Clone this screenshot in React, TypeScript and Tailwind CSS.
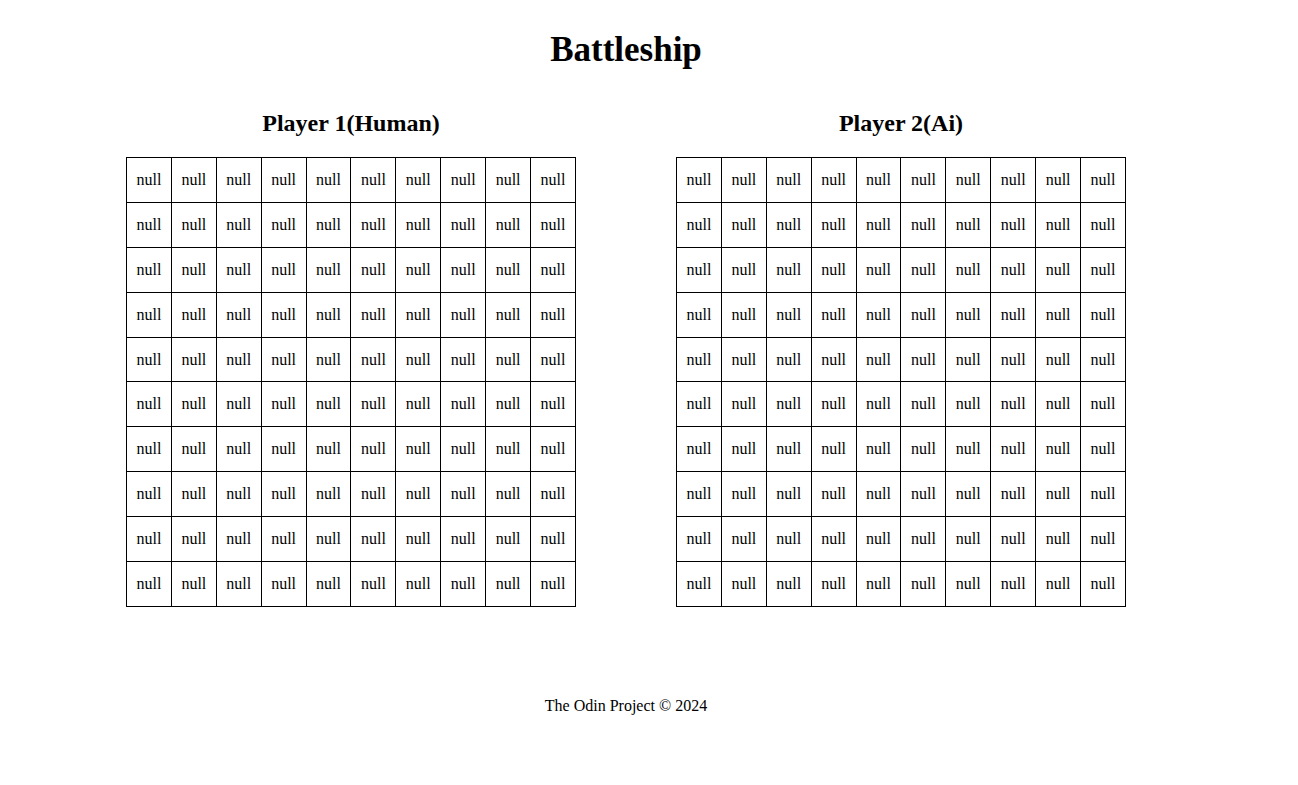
const SIZE = 10;

type BoardData = (string | null)[][];

const emptyBoard: BoardData = Array.from({ length: SIZE }, () =>
  Array.from({ length: SIZE }, () => null),
);

function Board({ title, cells }: { title: string; cells: BoardData }) {
  return (
    <section className="flex flex-col items-center gap-5">
      <h2 className="text-2xl leading-7 font-bold">{title}</h2>
      <div className="grid h-[450px] w-[450px] grid-cols-[repeat(10,10%)] grid-rows-[repeat(10,10%)] border-r border-b border-black">
        {cells.flatMap((row, y) =>
          row.map((cell, x) => (
            <div
              key={`${y}-${x}`}
              className="flex items-center justify-center border-t border-l border-black"
            >
              {String(cell)}
            </div>
          )),
        )}
      </div>
    </section>
  );
}

export default function App() {
  return (
    <div className="bg-white pr-[46px] font-['Liberation_Serif',serif] text-base text-black">
      <header className="flex justify-center pt-[29px]">
        <h1 className="text-[35px] leading-[42px] font-bold">Battleship</h1>
      </header>
      <main className="flex justify-center gap-[100px] pt-[38px]">
        <Board title="Player 1(Human)" cells={emptyBoard} />
        <Board title="Player 2(Ai)" cells={emptyBoard} />
      </main>
      <footer className="flex justify-center pt-[90px] pb-16">
        <p className="leading-[18px]">The Odin Project © 2024</p>
      </footer>
    </div>
  );
}
